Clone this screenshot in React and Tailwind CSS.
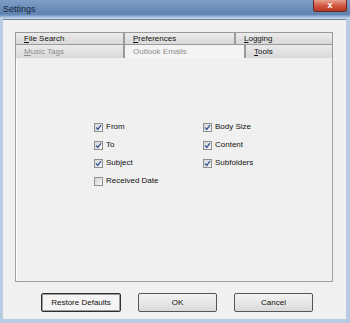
import React from 'react';

const Check = ({ checked }) => (
  <span className="w-[9px] h-[9px] border border-[#8e8f8f] bg-[linear-gradient(135deg,#d6d6d6,#f7f7f7)] flex items-center justify-center shrink-0">
    {checked && (
      <svg width="7" height="7" viewBox="0 0 7 7">
        <path d="M1 3.6 L2.8 5.4 L6 1.2" fill="none" stroke="#3d5a98" strokeWidth="1.4" />
      </svg>
    )}
  </span>
);

const Option = ({ label, checked }) => (
  <div className="h-[18px] flex items-center gap-[3px]">
    <Check checked={checked} />
    <span className="text-[8px] text-[#111]">{label}</span>
  </div>
);

const Tab = ({ width, first, rest, muted, selected, tall }) => (
  <div
    className={`${width} ${tall ? 'h-[14px]' : 'h-[12px]'} flex items-center pl-[8px] text-[8px] border-t border-l border-r border-[#9a9a9a] ${
      selected ? 'bg-[#f4f4f4] border-b-0' : 'bg-[linear-gradient(to_bottom,#ebebeb,#d9d9d9)]'
    } ${muted ? 'text-[#8c8c8c]' : 'text-[#111]'}`}
  >
    <span>
      <span className="underline">{first}</span>
      {rest}
    </span>
  </div>
);

const Btn = ({ children, width, strong }) => (
  <button
    className={`${width} h-[19px] text-[8px] text-[#111] rounded-[2px] border ${
      strong ? 'border-[#2f2f2f] bg-[#f4f4f4] shadow-[inset_0_0_0_1px_#9c9c9c]' : 'border-[#555] bg-[linear-gradient(to_bottom,#f3f3f3,#dadada)]'
    }`}
  >
    {children}
  </button>
);

export default function App() {
  return (
    <div className="w-[350px] h-[323px] flex flex-col bg-[#b7cbe3] font-['Liberation_Sans',Arial,sans-serif]">
      {/* title bar */}
      <div className="h-[19px] relative bg-[linear-gradient(to_bottom,#7f9ec6_0%,#5f82b1_75%,#a6bfdd_90%,#c9d8ea_100%)]">
        <span className="absolute left-[3px] top-[3px] text-[9px] text-[#17263a]">Settings</span>
        <div className="absolute right-[3px] top-0 w-[34px] h-[12px] rounded-b-[3px] border border-t-0 border-[#6a2a22] bg-[linear-gradient(to_bottom,#e8a08e,#d0533d_55%,#b63a26)] flex items-center justify-center">
          <span className="text-white text-[9px] font-bold leading-none">x</span>
        </div>
      </div>

      {/* client */}
      <div className="flex-1 ml-[3px] mr-[4px] mb-[4px] bg-[#f0f0f0] border-t border-[#6f7f93] flex flex-col pl-[12px] pt-[12px]">
        <div className="w-[318px] flex flex-col">
          <div className="flex">
            <Tab width="w-[109px]" first="F" rest="ile Search" />
            <Tab width="w-[111px]" first="P" rest="references" />
            <Tab width="w-[98px]" first="L" rest="ogging" />
          </div>
          <div className="flex">
            <Tab width="w-[109px]" first="M" rest="usic Tags" muted tall />
            <Tab width="w-[121px]" first="" rest="Outlook Emails" muted selected tall />
            <Tab width="w-[88px]" first="T" rest="ools" tall />
          </div>
          <div className="h-[224px] border border-t-0 border-[#a0a0a0] bg-[#f0f0f0] shadow-[inset_1px_0_0_#ffffff] pt-[60px] flex">
            <div className="ml-[78px] w-[109px] flex flex-col">
              <Option label="From" checked />
              <Option label="To" checked />
              <Option label="Subject" checked />
              <Option label="Received Date" />
            </div>
            <div className="flex flex-col">
              <Option label="Body Size" checked />
              <Option label="Content" checked />
              <Option label="Subfolders" checked />
            </div>
          </div>
        </div>

        <div className="flex gap-[17px] ml-[26px] mt-[11px]">
          <Btn width="w-[80px]" strong>Restore Defaults</Btn>
          <Btn width="w-[79px]">OK</Btn>
          <Btn width="w-[79px]">Cancel</Btn>
        </div>
      </div>
    </div>
  );
}
